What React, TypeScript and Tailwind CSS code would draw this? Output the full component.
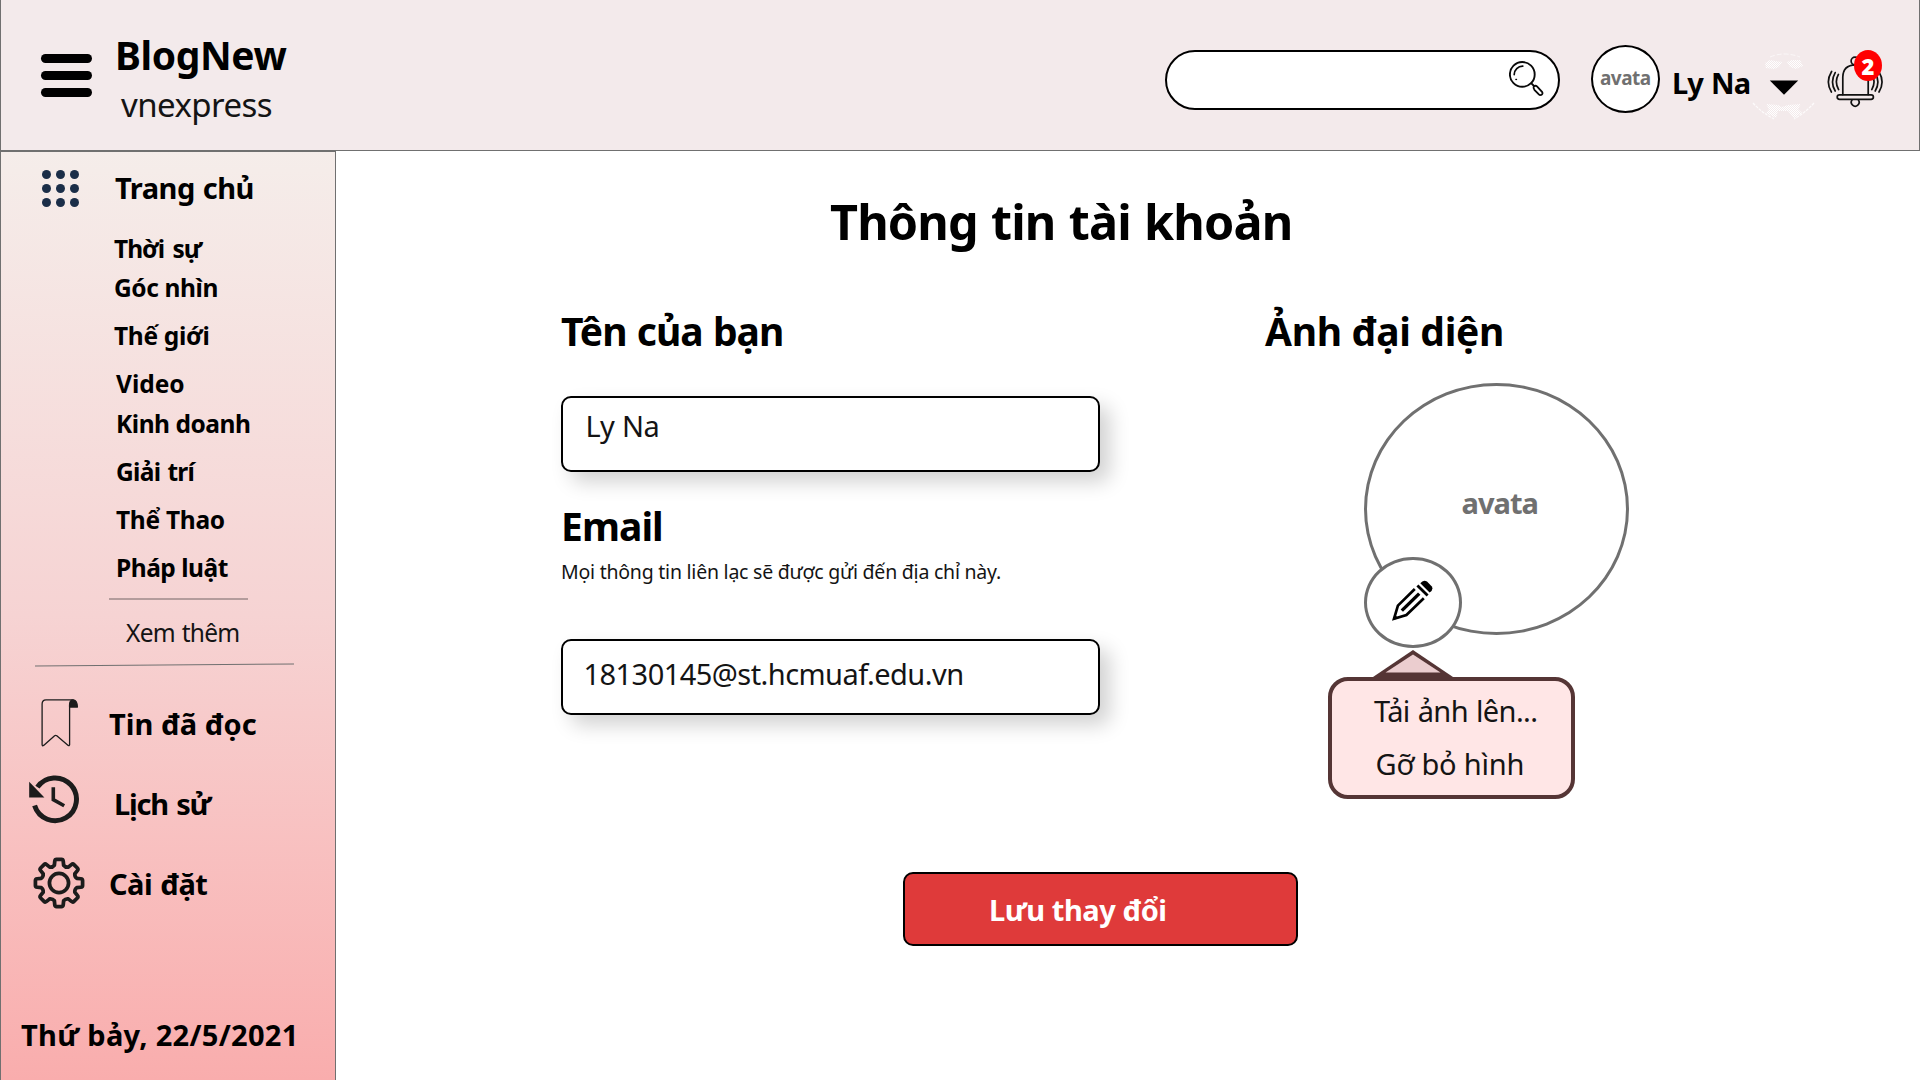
import React from 'react';

const categories = [
  { label: 'Thời sự', cls: 'pl-[113px] tracking-[-1px] [word-spacing:3px]' },
  { label: 'Góc nhìn', cls: 'pl-[113px] mt-px tracking-[-0.4px]' },
  { label: 'Thế giới', cls: 'pl-[113px] mt-[10px] tracking-[-0.3px]' },
  { label: 'Video', cls: 'pl-[115px] mt-[10px]' },
  { label: 'Kinh doanh', cls: 'pl-[115px] mt-[2px] tracking-[-0.48px]' },
  { label: 'Giải trí', cls: 'pl-[115px] mt-[10px] tracking-[-0.7px] [word-spacing:1.5px]' },
  { label: 'Thể Thao', cls: 'pl-[115px] mt-[10px] tracking-[-0.28px]' },
  { label: 'Pháp luật', cls: 'pl-[115px] mt-[10px] tracking-[-0.48px]' },
];

function gearPath() {
  let d = '';
  for (let i = 0; i < 8; i++) {
    const a = (i * Math.PI) / 4;
    const p = (x: number, y: number) =>
      `${(x * Math.cos(a) - y * Math.sin(a)).toFixed(2)} ${(x * Math.sin(a) + y * Math.cos(a)).toFixed(2)}`;
    d += `${i === 0 ? 'M' : 'L'}${p(-4.6, -17.6)} L${p(-4.2, -21.6)} Q${p(-4, -23.4)} ${p(-2.4, -23.4)} L${p(2.4, -23.4)} Q${p(4, -23.4)} ${p(4.2, -21.6)} L${p(4.6, -17.6)} Q${p(6.3, -15.4)} ${p(9.2, -15.7)} `;
  }
  return d + 'Z';
}

function MenuIcon() {
  return (
    <div className="mt-[54px] ml-[40px] flex w-[51px] flex-col gap-[8px]">
      <span className="h-[9px] rounded-full bg-black" />
      <span className="h-[9px] rounded-full bg-black" />
      <span className="h-[9px] rounded-full bg-black" />
    </div>
  );
}

function SearchIcon() {
  return (
    <svg width="36" height="36" viewBox="0 0 36 36" fill="none" stroke="#0a0a0a" strokeWidth="1.9" strokeLinecap="round">
      <circle cx="13.3" cy="13.4" r="12.4" />
      <path d="M5.2 13.6 A8.4 8.4 0 0 1 13.8 5.2" strokeWidth="1.7" />
      <circle cx="7.1" cy="18.4" r="0.5" strokeWidth="1" />
      <path d="M22.4 22.4 L25 25" />
      <path d="M24.8 25.2 Q26.6 24.2 28 25.4 L33 30.8 Q34.3 33 32.4 33.8 Q31 34.6 29.6 33.2 L25.4 28.8 Q24 27 24.8 25.2 Z" strokeWidth="1.8" />
    </svg>
  );
}

function Caret() {
  return (
    <svg width="64" height="74" viewBox="0 0 64 74">
      <defs>
        <pattern id="dots" width="2" height="2" patternUnits="userSpaceOnUse">
          <rect width="1" height="1" fill="#fff" />
          <rect x="1" y="1" width="1" height="1" fill="#fff" />
        </pattern>
      </defs>
      <path d="M13 10 L18 7 L30 9 L27 14 L22 16 L14 15 Z M35 9 L40 7 L48 7 L51 13 L44 16 L38 14 Z" fill="url(#dots)" />
      <path d="M14 51 L26 52 L30 54 L36 52 L49 51 L46 56 L50 60 L42 65 L36 58 L26 58 L24 65 L14 60 L17 56 Z" fill="url(#dots)" />
      <path d="M18 4 Q32 -2 48 4" fill="none" stroke="#fff" strokeOpacity="0.6" strokeDasharray="5 2" />
      <path d="M1 50 Q10 60 22 66 M62 50 Q53 60 42 66" fill="none" stroke="#fff" strokeOpacity="0.8" strokeWidth="1.2" strokeDasharray="3 1" />
      <path d="M17.8 27.5 H46.2 L32 41.7 Z" fill="#000" />
    </svg>
  );
}

function Bell() {
  return (
    <svg width="56" height="60" viewBox="0 0 56 60" fill="none" stroke="#111" strokeWidth="1.7" strokeLinecap="round">
      <circle cx="28" cy="12" r="3.9" />
      <path d="M15.8 45.6 V28 Q16 16 28.5 15.8 Q41 16 41.2 28 V45.6" />
      <rect x="10.2" y="45.8" width="36.2" height="4.6" rx="2.3" />
      <path d="M25 51 A3.9 3.9 0 1 0 31.4 51" />
      <path d="M4.6 22.5 Q-1.8 33 4.4 43 M8.2 23.6 Q2.8 33 8.2 42 M11.4 25.4 Q7.2 33 11.6 40.6" />
      <path d="M51.8 22.5 Q58.2 33 52 43 M48.2 23.6 Q53.6 33 48.2 42 M45 25.4 Q49.2 33 44.8 40.6" />
    </svg>
  );
}

function GridIcon() {
  return (
    <div className="mt-[2px] ml-[41px] flex flex-col gap-[5px]">
      {[0, 1, 2].map((r) => (
        <div key={r} className="flex gap-[5px]">
          <span className="size-[9px] rounded-full bg-[#1b2e48]" />
          <span className="size-[9px] rounded-full bg-[#1b2e48]" />
          <span className="size-[9px] rounded-full bg-[#1b2e48]" />
        </div>
      ))}
    </div>
  );
}

function BookmarkIcon() {
  return (
    <svg className="ml-[40px]" width="38" height="48" viewBox="0 0 38 48" fill="none" stroke="#1c1c1c" strokeWidth="1.3" strokeLinejoin="round">
      <path d="M32.5 0.9 H5 Q1.1 1 1.1 5 V46 Q1.3 47.3 2.6 46.4 L13.6 36.8 Q14.7 36 15.8 36.8 L27.2 46.4 Q28.5 47 28.6 45.8 V5.5" />
      <path d="M28.6 8 V5 Q28.8 1 32.5 0.9 Q36.2 1.6 36.4 8 Z" fill="#1c1c1c" />
    </svg>
  );
}

function HistoryIcon() {
  return (
    <svg className="ml-[28px]" width="51" height="49" viewBox="0 0 51 49" fill="none" stroke="#1c1c1c">
      <path d="M5.6 30.6 A21.4 21.4 0 1 0 8.4 12.2" strokeWidth="5" />
      <path d="M0.2 6.7 V22.4 H15.4 Z" fill="#1c1c1c" stroke="none" />
      <path d="M24.3 12.3 V24.6 L35.2 30.8" strokeWidth="3.6" />
    </svg>
  );
}

function GearIcon() {
  return (
    <svg className="ml-[32px]" width="52" height="52" viewBox="-25.8 -25.8 51.6 51.6" fill="none" stroke="#1c1c1c" strokeWidth="3.7" strokeLinejoin="round">
      <path d={gearPath()} />
      <circle r="9.5" />
    </svg>
  );
}

function PencilIcon() {
  return (
    <svg width="41" height="41" viewBox="0 0 41 41" fill="none" stroke="#000">
      <path d="M28.3 3.2 Q31.5 -0.8 35 1.6 L39.6 6.2 Q42 9.6 37.6 12.6 Z" fill="#000" stroke="none" />
      <path d="M25.4 5.4 L35.6 15.6" strokeWidth="2.8" />
      <path d="M22.8 9 L5.9 25.6 L2 38.8 L14.4 35 L31.8 18.2" strokeWidth="2.7" />
      <path d="M27.2 13.6 L9.8 30.6" strokeWidth="3.4" />
      <path d="M1 40 L2.5 34.5 L6.5 38.3 Z" fill="#000" stroke="none" />
    </svg>
  );
}

function Header() {
  return (
    <header className="flex h-[151px] items-start border border-t-0 border-[#707070] bg-[#f3eaeb]">
      <MenuIcon />
      <div className="mt-[30px] ml-[23px] w-[1050px]">
        <div className="text-[39px] leading-[50px] font-bold tracking-[-0.4px]">BlogNew</div>
        <div className="mt-[5px] pl-[6px] text-[33px] leading-[40px] tracking-[-0.55px] text-[#141414]">vnexpress</div>
      </div>
      <div className="mt-[50px] flex h-[60px] w-[395px] justify-end rounded-full border-2 border-black bg-white pt-[9px] pr-[13px]">
        <SearchIcon />
      </div>
      <div className="mt-[45px] ml-[31px] h-[68px] w-[69px] rounded-[50%] border-2 border-black bg-white pt-[16px] pl-[7px] text-[19px] leading-[30px] font-bold tracking-[-0.55px] text-[#707070]">
        avata
      </div>
      <div className="mt-[63px] ml-[12px] w-[80px] text-[29px] leading-[40px] font-bold tracking-[-0.9px] [word-spacing:1.5px]">Ly Na</div>
      <div className="mt-[53px]">
        <Caret />
      </div>
      <div className="relative mt-[49px] ml-[11px]">
        <Bell />
        <div className="absolute top-[1px] left-[27px] flex h-[31px] w-[28px] items-center justify-center rounded-[50%] bg-[#ff0000] text-[22px] leading-none font-black text-white">
          2
        </div>
      </div>
    </header>
  );
}

function Sidebar() {
  return (
    <aside className="flex w-[336px] flex-col border border-b-0 border-[#707070] bg-linear-to-b from-[#f5edea] via-[#f6d3d3] via-50% to-[#f9adad]">
      <div className="mt-[16px] flex h-[40px] items-start">
        <GridIcon />
        <div className="ml-[36px] text-[29px] leading-[40px] font-bold tracking-[-0.5px] [word-spacing:1px]">Trang chủ</div>
      </div>
      <nav className="mt-[22px] text-[24.5px] leading-[38px] font-bold">
        {categories.map((c) => (
          <div key={c.label} className={c.cls}>
            {c.label}
          </div>
        ))}
      </nav>
      <div className="mt-[11px] ml-[108px] h-[2px] w-[139px] bg-[#b49c9c]" />
      <div className="mt-[14px] pl-[125px] text-[24.5px] leading-[38px] tracking-[-0.7px] [word-spacing:1px] text-[#141414]">Xem thêm</div>
      <svg className="mt-[11px] ml-[34px]" width="260" height="4" viewBox="0 0 260 4">
        <path d="M0 3 L259 1" stroke="#707070" strokeWidth="1.1" />
      </svg>
      <div className="mt-[32px] flex items-start">
        <BookmarkIcon />
        <div className="mt-[5px] ml-[30px] text-[29px] leading-[40px] font-bold tracking-[0.05px]">Tin đã đọc</div>
      </div>
      <div className="mt-[28px] flex items-start">
        <HistoryIcon />
        <div className="mt-[9px] ml-[34px] text-[29px] leading-[40px] font-bold tracking-[-1.2px] [word-spacing:2px]">Lịch sử</div>
      </div>
      <div className="mt-[33px] flex items-start">
        <GearIcon />
        <div className="mt-[7px] ml-[24px] text-[29px] leading-[40px] font-bold tracking-[-0.5px] [word-spacing:1px]">Cài đặt</div>
      </div>
      <div className="mt-[106px] pl-[20px] text-[29px] leading-[40px] font-bold tracking-[0.3px]">Thứ bảy, 22/5/2021</div>
    </aside>
  );
}

function AvatarEditor() {
  return (
    <section>
      <h2 className="text-[39px] leading-[50px] font-bold tracking-[-0.35px]">Ảnh đại diện</h2>
      <div className="relative mt-[27px] ml-[99px] h-[252px] w-[265px] rounded-[50%] border-[3px] border-[#707070] pt-[97px] pl-[94.5px] text-[29px] leading-[40px] font-bold tracking-[-0.95px] text-[#707070]">
        avata
        <div className="absolute top-[170.5px] left-[-3px] h-[91.5px] w-[98px] rounded-[50%] border-[3px] border-[#707070] bg-white pt-[20px] pl-[25px]">
          <PencilIcon />
        </div>
        <div className="absolute top-[264px] left-[-39px] w-[247px]">
          <svg className="ml-[45px]" width="80" height="28" viewBox="0 0 80 28">
            <path d="M40 0 L80 27 V28 H0 V27 Z" fill="#553535" />
            <path d="M40 4.6 L67.5 22.6 H12.5 Z" fill="#ebcdcf" />
          </svg>
          <div className="mt-[-1px] h-[122px] rounded-[20px] border-4 border-[#553535] bg-[#ffe6e6] pt-[10px] font-normal text-[#141414]">
            <div className="pl-[42px] tracking-[-0.6px] [word-spacing:1px]">Tải ảnh lên...</div>
            <div className="mt-[13px] pl-[43.5px] tracking-[-0.2px]">Gỡ bỏ hình</div>
          </div>
        </div>
      </div>
    </section>
  );
}

function AccountForm() {
  return (
    <main className="flex-1 bg-white">
      <h1 className="mt-[40px] ml-[494px] text-[48.5px] leading-[60px] font-bold tracking-[-0.85px] [word-spacing:1.5px]">Thông tin tài khoản</h1>
      <div className="mt-[55px] ml-[225px] flex gap-[165px]">
        <section className="w-[539px]">
          <h2 className="text-[39px] leading-[50px] font-bold tracking-[-0.95px] [word-spacing:1px]">Tên của bạn</h2>
          <div className="mt-[40px] h-[76px] rounded-[10px] border-2 border-black bg-white pt-[8px] pl-[22.5px] text-[29px] leading-[40px] tracking-[-0.65px] [word-spacing:1px] text-[#141414] shadow-[10px_10px_20px_rgba(0,0,0,0.18)]">
            Ly Na
          </div>
          <h2 className="mt-[29px] text-[39px] leading-[50px] font-bold tracking-[-0.95px]">Email</h2>
          <p className="mt-[6px] text-[19.5px] leading-[30px] tracking-[-0.23px] whitespace-nowrap text-[#141414]">
            Mọi thông tin liên lạc sẽ được gửi đến địa chỉ này.
          </p>
          <div className="mt-[52px] h-[76px] rounded-[10px] border-2 border-black bg-white pt-[13px] pl-[20.5px] text-[29px] leading-[40px] tracking-[-0.55px] text-[#141414] shadow-[10px_10px_20px_rgba(0,0,0,0.18)]">
            18130145@st.hcmuaf.edu.vn
          </div>
        </section>
        <AvatarEditor />
      </div>
      <button className="mt-[157px] ml-[567px] block h-[74px] w-[395px] rounded-[10px] border-2 border-black bg-[#df3a3a] pt-px pl-[84px] text-left text-[29px] leading-[40px] font-bold tracking-[-0.45px] text-white">
        Lưu thay đổi
      </button>
    </main>
  );
}

export default function App() {
  return (
    <div className="flex h-[1080px] w-[1920px] flex-col overflow-hidden bg-white font-['Noto_Sans',sans-serif] text-black">
      <Header />
      <div className="flex flex-1">
        <Sidebar />
        <AccountForm />
      </div>
    </div>
  );
}
